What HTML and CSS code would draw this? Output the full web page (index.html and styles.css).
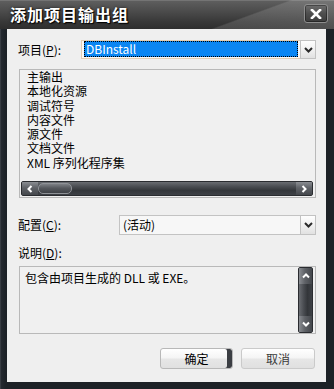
FILE: index.html
```html
<!DOCTYPE html>
<html lang="zh-CN">
<head>
<meta charset="utf-8">
<title>添加项目输出组</title>
<link rel="stylesheet" href="styles.css">
</head>
<body>
<div class="window">
  <div class="titlebar">
    <span class="title">添加项目输出组</span>
    <span class="close">
      <svg width="12" height="10" viewBox="0 0 12 10"><path d="M2 1 L10 9 M10 1 L2 9" stroke="#fff" stroke-width="2.6" stroke-linecap="square"/></svg>
    </span>
  </div>
  <div class="client">
    <div class="row row-project">
      <label class="label lbl-project">项目(<u>P</u>):</label>
      <div class="combo combo-project">
        <div class="combo-value"><span class="sel">DBInstall</span></div>
        <div class="combo-btn"><svg width="9" height="6" viewBox="0 0 9 6"><polyline points="1,1 4.5,4.5 8,1" fill="none" stroke="#2b2b2b" stroke-width="2"/></svg></div>
      </div>
    </div>

    <div class="listbox">
      <ul class="items">
        <li>主输出</li>
        <li>本地化资源</li>
        <li>调试符号</li>
        <li>内容文件</li>
        <li>源文件</li>
        <li>文档文件</li>
        <li>XML 序列化程序集</li>
      </ul>
      <div class="hscroll">
        <div class="sb-btn"><svg width="8" height="8" viewBox="0 0 8 8"><polyline points="5.5,1 2.5,4 5.5,7" fill="none" stroke="#fff" stroke-width="2"/></svg></div>
        <div class="hthumb"></div>
        <div class="htrack"></div>
        <div class="sb-btn"><svg width="8" height="8" viewBox="0 0 8 8"><polyline points="2.5,1 5.5,4 2.5,7" fill="none" stroke="#fff" stroke-width="2"/></svg></div>
      </div>
    </div>

    <div class="row row-config">
      <label class="label lbl-config">配置(<u>C</u>):</label>
      <div class="combo">
        <div class="combo-value"><span class="val">(活动)</span></div>
        <div class="combo-btn"><svg width="9" height="6" viewBox="0 0 9 6"><polyline points="1,1 4.5,4.5 8,1" fill="none" stroke="#2b2b2b" stroke-width="2"/></svg></div>
      </div>
    </div>

    <div class="label lbl-desc">说明(<u>D</u>):</div>
    <div class="desc">
      <div class="desc-text">包含由项目生成的 DLL 或 EXE。</div>
      <div class="vscroll">
        <div class="vsb-btn"><svg width="8" height="8" viewBox="0 0 8 8"><polyline points="1,5.5 4,2.5 7,5.5" fill="none" stroke="#fff" stroke-width="2"/></svg></div>
        <div class="vtrack"></div>
        <div class="vsb-btn"><svg width="8" height="8" viewBox="0 0 8 8"><polyline points="1,2.5 4,5.5 7,2.5" fill="none" stroke="#fff" stroke-width="2"/></svg></div>
      </div>
    </div>

    <div class="buttons">
      <button class="btn btn-ok">确定</button>
      <button class="btn btn-cancel">取消</button>
    </div>
  </div>
</div>
</body>
</html>
```

FILE: styles.css
```css
* { box-sizing: border-box; }
html, body { margin: 0; padding: 0; }
body {
  width: 334px;
  height: 389px;
  overflow: hidden;
  background: #1e2328;
  font-family: "Noto Sans CJK SC", "Liberation Sans", sans-serif;
  font-size: 12px;
  color: #000;
}
.window {
  width: 334px;
  height: 389px;
  display: flex;
  flex-direction: column;
  background: linear-gradient(to right, #4a4f55 0, #252a30 1px, #1c2126 6px, #1c2126 100%);
}
.titlebar {
  height: 29px;
  flex: none;
  display: flex;
  align-items: flex-start;
  padding: 0 6px 0 10px;
  background:
    linear-gradient(160deg, rgba(255,255,255,0) 70%, rgba(255,255,255,0.13) 71%, rgba(255,255,255,0.16) 100%),
    linear-gradient(to bottom, #8a8a8a 0, #5e5e5e 1px, #4b4b4b 40%, #383838 75%, #2e2e2e 100%);
}
.title {
  margin-top: 4px;
  color: #fff;
  font-weight: bold;
  font-size: 16px;
  line-height: 20px;
  letter-spacing: 1px;
  text-shadow: 1px 1px 1px #000, 0 0 3px rgba(0,0,0,0.7);
}
.close {
  margin-left: auto;
  margin-top: 4px;
  width: 24px;
  height: 19px;
  border: 1px solid #8e8e8e;
  border-radius: 3px;
  background: linear-gradient(to bottom, #6e6e6e 0, #4e4e4e 50%, #3c3c3c 100%);
  box-shadow: inset 0 0 0 1px rgba(0,0,0,0.35);
  display: flex;
  align-items: center;
  justify-content: center;
}
.client {
  margin: 0 8px 0 7px;
  height: 353px;
  flex: none;
  background: #efefef;
  padding: 0 10px 0 12px;
}
.row { display: flex; align-items: center; }
.label { line-height: 16px; white-space: nowrap; }
.label u { text-decoration: underline; text-underline-offset: 1px; }
.row-project { margin-top: 11px; height: 19px; }
.lbl-project { width: 63px; flex: none; margin-left: -1px; padding-right: 1px; }
.row-config { margin-top: 17px; height: 20px; }
.lbl-config { width: 101px; flex: none; margin-left: -1px; padding-right: 1px; }

.combo {
  flex: 1;
  height: 100%;
  display: flex;
  border: 1px solid #c3c3c3;
  background: #f7f7f7;
}
.combo-project { border-color: #e2cdb3; background: #fbf8f4; }
.combo-value {
  flex: 1;
  display: flex;
  align-items: stretch;
  padding: 0 2px 1px 2px;
  min-width: 0;
}
.combo-project .combo-value { padding: 0 2px 1px 2px; }
.sel {
  display: block;
  width: 100%;
  background: #0b86f2;
  color: #fff;
  border: 1px dotted #000;
  padding-left: 1px;
  line-height: 14px;
  font-size: 12px;
}
.val { align-self: center; padding-left: 1px; line-height: 16px; }
.combo-btn {
  width: 16px;
  flex: none;
  margin: -1px -1px -1px 0;
  border: 1px solid #c2c2c2;
  background: linear-gradient(to bottom, #fefefe 0, #f1f1f1 50%, #e1e1e1 100%);
  display: flex;
  align-items: center;
  justify-content: center;
}

.listbox {
  margin-top: 10px;
  height: 129px;
  border: 1px solid #b9b9b9;
  background: #f0f0f0;
  display: flex;
  flex-direction: column;
}
.items {
  list-style: none;
  margin: 0;
  padding: 0 0 0 7px;
  flex: 1;
  line-height: 14.3px;
}
.hscroll {
  height: 15px;
  flex: none;
  margin: 0 2px 1px 1px;
  display: flex;
  border: 1px solid #2a2c30;
  border-radius: 2px;
  background: linear-gradient(to bottom, #6a6d72 0, #4a4d52 35%, #33363a 65%, #3e4146 100%);
  overflow: hidden;
}
.sb-btn {
  width: 16px;
  flex: none;
  display: flex;
  align-items: center;
  justify-content: center;
  background: linear-gradient(to bottom, #8a8d92 0, #5f6267 45%, #44474c 100%);
}
.hthumb {
  width: 34px;
  flex: none;
  margin: 1px 0;
  border: 1px solid #8e9196;
  border-radius: 5px;
  background: linear-gradient(to bottom, #7d8085 0, #55585d 45%, #3e4146 100%);
}
.htrack { flex: 1; }

.lbl-desc { margin-top: 10px; margin-left: -1px; }
.desc {
  margin-top: 5px;
  height: 68px;
  border: 1px solid #b9b9b9;
  background: #f0f0f0;
  display: flex;
}
.desc-text { flex: 1; padding: 3px 0 0 5px; line-height: 16px; }
.vscroll {
  width: 15px;
  flex: none;
  margin: 0 2px 0 0;
  display: flex;
  flex-direction: column;
  border: 1px solid #2a2c30;
  border-radius: 2px;
  background: linear-gradient(to right, #6a6d72 0, #4a4d52 35%, #33363a 65%, #3e4146 100%);
  overflow: hidden;
}
.vsb-btn {
  height: 16px;
  flex: none;
  display: flex;
  align-items: center;
  justify-content: center;
  background: linear-gradient(to right, #8a8d92 0, #5f6267 45%, #44474c 100%);
}
.vtrack { flex: 1; }

.buttons {
  margin-top: 14px;
  display: flex;
  justify-content: flex-end;
  gap: 8px;
  padding-right: 1px;
}
.btn {
  height: 21px;
  width: 74px;
  padding: 0;
  border: 1px solid #cacaca;
  border-radius: 3px;
  background: linear-gradient(to bottom, #ffffff 0, #f5f5f5 45%, #e6e6e6 55%, #e0e0e0 100%);
  font-family: "Noto Sans CJK SC", "Liberation Sans", sans-serif;
  font-size: 12px;
  line-height: 18px;
  color: #000;
}
.btn-ok {
  width: 73px;
  border-color: #b8b8b8;
  box-shadow: inset -5px 0 0 #3b3e43;
}
.btn-cancel { color: #3a3a3a; }
```
